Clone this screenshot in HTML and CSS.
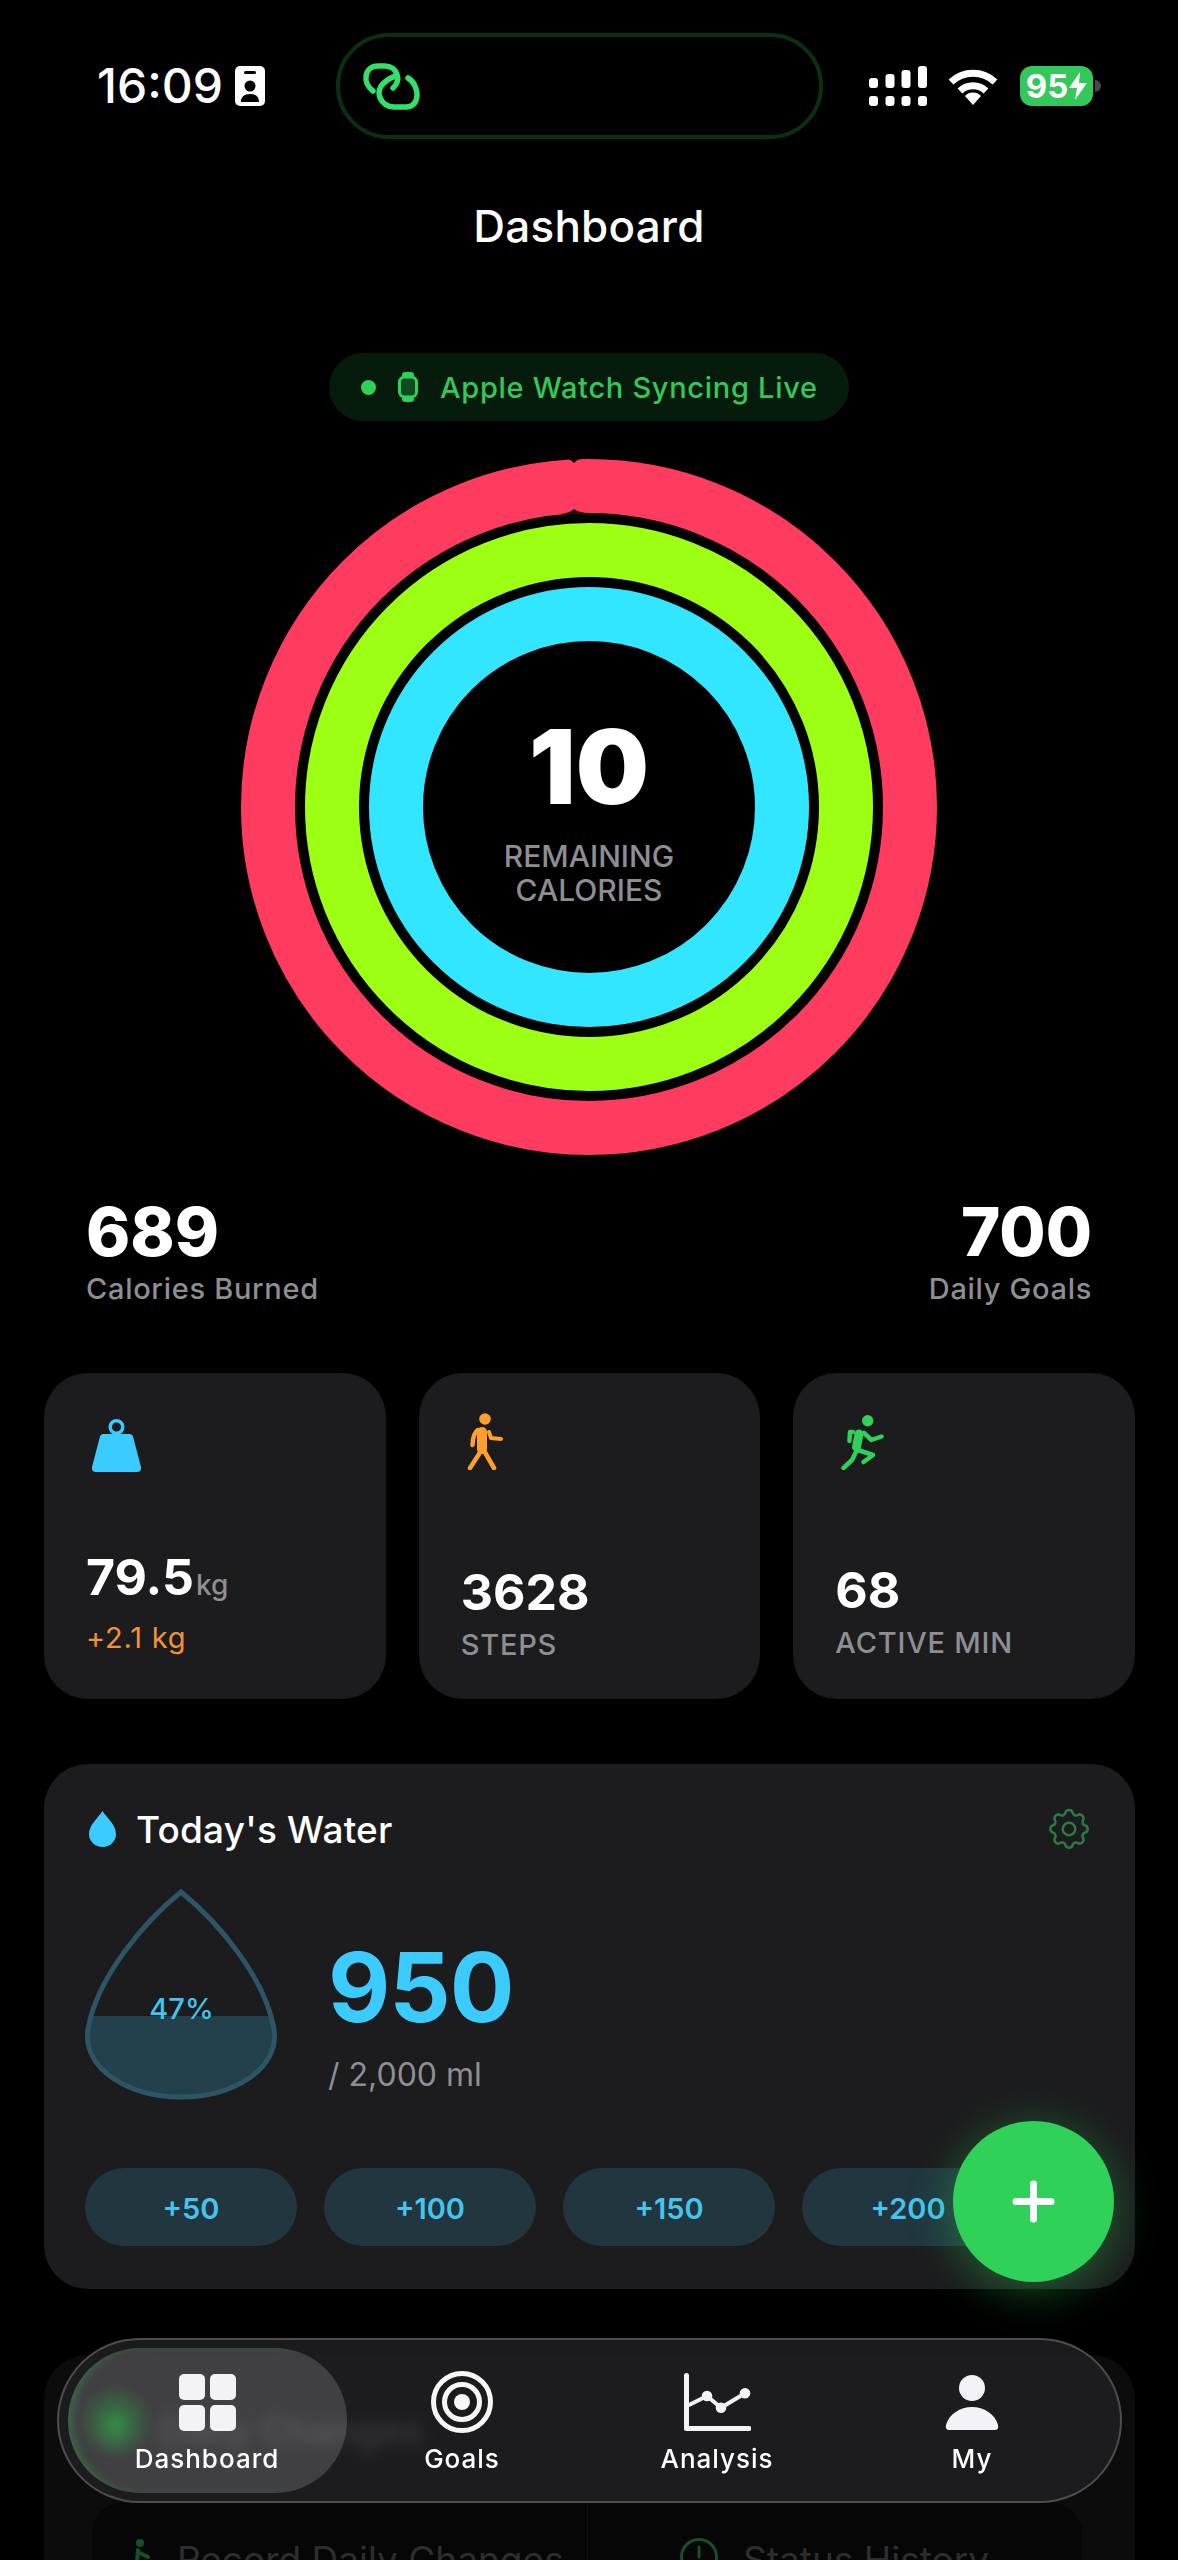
FILE: index.html
```html
<!DOCTYPE html>
<html lang="en">
<head>
    <meta charset="UTF-8">
    <meta name="viewport" content="width=device-width, initial-scale=1.0">
    <title>Dashboard</title>
    <link rel="stylesheet" href="styles.css">
</head>
<body>
    <header class="status">
        <div class="status-left">
            <span class="time">16:09</span>
            <svg class="badge" viewBox="0 0 30 40" width="30" height="40">
                <rect width="30" height="40" rx="5" fill="#fff"/>
                <rect x="9" y="5" width="12" height="3" rx="1.5" fill="#000"/>
                <circle cx="15" cy="20" r="5.5" fill="#000"/>
                <path d="M6 36Q6 28 15 28Q24 28 24 36Z" fill="#000"/>
            </svg>
        </div>
        <div class="island">
            <svg class="link" viewBox="0 0 60 47" width="60" height="47" fill="none" stroke="#32e06c" stroke-width="5.5" stroke-linecap="round">
                <path d="M12 28C1 20 3 3 17 3H24C36 3 41 17 32 25"/>
                <path d="M47 15C59 22 60 45 44 44H33C20 44 12 28 24 19C27 16 31 14 36 13"/>
            </svg>
        </div>
        <div class="status-right">
            <svg viewBox="0 0 60 40" width="60" height="40" fill="#fff">
                <rect x="0" y="12" width="9" height="10" rx="3"/>
                <rect x="16.5" y="8" width="9" height="14" rx="3"/>
                <rect x="32.5" y="4" width="9" height="18" rx="3"/>
                <rect x="49" y="0" width="9" height="22" rx="3"/>
                <rect x="0" y="30" width="9" height="10" rx="3"/>
                <rect x="16.5" y="30" width="9" height="10" rx="3"/>
                <rect x="32.5" y="30" width="9" height="10" rx="3"/>
                <rect x="49" y="30" width="9" height="10" rx="3"/>
            </svg>
            <svg class="wifi" viewBox="0 0 50 37" width="50" height="37" fill="none" stroke="#fff" stroke-width="7">
                <path d="M3 14A32 32 0 0 1 47 14"/>
                <path d="M12 23A19 19 0 0 1 38 23"/>
                <path d="M25 37L17 28A11 11 0 0 1 33 28Z" fill="#fff" stroke="none"/>
            </svg>
            <div class="battery">
                <span>95</span>
                <svg viewBox="0 0 18 28" width="18" height="28"><path d="M11 0L0 16H8L6 28L18 11H10Z" fill="#fff"/></svg>
            </div>
            <i class="battery-cap"></i>
        </div>
    </header>

    <h1 class="title">Dashboard</h1>

    <div class="sync">
        <i class="sync-dot"></i>
        <svg viewBox="0 0 20 30" width="20" height="30">
            <rect x="4" y="0" width="12" height="30" rx="3" fill="#30d158"/>
            <rect x="1.5" y="5" width="17" height="20" rx="5" fill="#0f4a22" stroke="#30d158" stroke-width="3"/>
        </svg>
        <span>Apple Watch Syncing Live</span>
    </div>

    <section class="rings">
        <svg viewBox="0 0 700 700" width="700" height="700" fill="none" stroke-width="54">
            <circle cx="350" cy="350" r="321" stroke="#ff3b5f"/>
            <circle cx="350" cy="350" r="257" stroke="#9dff14"/>
            <circle cx="350" cy="350" r="193" stroke="#32e6ff"/>
            <path d="M320 0Q331 1 335 6Q339 1 350 0Z" fill="#000"/>
            <path d="M322 57Q331 56 335 52Q340 56 350 56Z" fill="#000"/>
        </svg>
        <div class="rings-text">
            <div class="rings-num">10</div>
            <div class="rings-label">REMAINING<br>CALORIES</div>
        </div>
    </section>

    <section class="totals">
        <div>
            <div class="total-num">689</div>
            <div class="total-label">Calories Burned</div>
        </div>
        <div class="total-right">
            <div class="total-num">700</div>
            <div class="total-label">Daily Goals</div>
        </div>
    </section>

    <section class="metrics">
        <div class="metric metric-weight">
            <svg viewBox="0 0 49 53" width="49" height="53" fill="#3ccbff">
                <circle cx="24.5" cy="8" r="6.3" fill="none" stroke="#3ccbff" stroke-width="3.4"/>
                <path d="M11 15H38Q40.5 15 41 17.5L49 48Q49.5 53 45 53H4Q-.5 53 0 48L8 17.5Q8.5 15 11 15Z"/>
            </svg>
            <div class="metric-text">
                <div class="metric-num">79.5<small>kg</small></div>
                <div class="metric-sub">+2.1 kg</div>
            </div>
        </div>
        <div class="metric metric-steps">
            <svg viewBox="0 0 36 57" width="36" height="57" fill="none" stroke="#ff9f2e" stroke-linecap="round" stroke-linejoin="round" stroke-width="4.5">
                <circle cx="18" cy="6" r="5.8" fill="#ff9f2e" stroke="none"/>
                <path d="M15 19V36" stroke-width="10"/>
                <path d="M11 17Q6 20 5.5 32"/>
                <path d="M22 19L24 25L34 26" stroke-width="4"/>
                <path d="M14 38L3 55"/>
                <path d="M16 36L27 55"/>
            </svg>
            <div class="metric-text">
                <div class="metric-num">3628</div>
                <div class="metric-label">STEPS</div>
            </div>
        </div>
        <div class="metric metric-active">
            <svg viewBox="0 0 43 55" width="43" height="55" fill="none" stroke="#30d158" stroke-linecap="round" stroke-linejoin="round" stroke-width="4.5">
                <circle cx="26.7" cy="5.7" r="5.7" fill="#30d158" stroke="none"/>
                <path d="M18 19L15.5 32" stroke-width="9"/>
                <path d="M12 17L9 17L8.5 26"/>
                <path d="M23 18L30.5 25L40.5 21.5"/>
                <path d="M16 35L11 45L2.5 53"/>
                <path d="M17 35L32 40L22.5 47"/>
            </svg>
            <div class="metric-text">
                <div class="metric-num">68</div>
                <div class="metric-label">ACTIVE MIN</div>
            </div>
        </div>
    </section>

    <section class="water">
        <div class="water-head">
            <svg class="water-drop" viewBox="0 0 27 36" width="27" height="36">
                <path d="M13.5 0C18 7 27 14 27 23A13.5 13 0 0 1 0 23C0 14 9 7 13.5 0Z" fill="#3ccbff"/>
            </svg>
            <h2>Today's Water</h2>
            <svg class="gear" viewBox="2 2 20 20" width="42" height="42" fill="none" stroke="#2b7a43" stroke-width="1.2" stroke-linejoin="round">
                <path d="M10.3 3.2C10.7 1.6 13.3 1.6 13.7 3.2A1.7 1.7 0 0 0 16.3 4.3C17.7 3.4 19.6 5.3 18.7 6.7A1.7 1.7 0 0 0 19.7 9.3C21.3 9.7 21.3 12.3 19.7 12.7A1.7 1.7 0 0 0 18.7 15.3C19.6 16.7 17.7 18.6 16.3 17.7A1.7 1.7 0 0 0 13.7 18.7C13.3 20.3 10.7 20.3 10.3 18.7A1.7 1.7 0 0 0 7.7 17.7C6.3 18.6 4.4 16.7 5.3 15.3A1.7 1.7 0 0 0 4.3 12.7C2.7 12.3 2.7 9.7 4.3 9.3A1.7 1.7 0 0 0 5.3 6.7C4.4 5.3 6.3 3.4 7.7 4.3A1.7 1.7 0 0 0 10.3 3.2Z" transform="translate(0 1)"/>
                <circle cx="12" cy="12" r="3"/>
            </svg>
        </div>
        <div class="water-body">
            <div class="tear">
                <svg viewBox="0 0 193 211" width="193" height="211">
                    <clipPath id="tearClip"><path d="M96 3C60 32 12 88 3 140C-3 180 44 208 96 208C148 208 195 180 189 140C180 88 132 32 96 3Z"/></clipPath>
                    <rect y="127" width="193" height="84" fill="#23414c" clip-path="url(#tearClip)"/>
                    <path d="M96 3C60 32 12 88 3 140C-3 180 44 208 96 208C148 208 195 180 189 140C180 88 132 32 96 3Z" fill="none" stroke="#2d5566" stroke-width="5"/>
                </svg>
                <span class="tear-pct">47%</span>
            </div>
            <div class="water-stat">
                <div class="water-num">950</div>
                <div class="water-goal">/ 2,000 ml</div>
            </div>
        </div>
        <div class="quick">
            <button>+50</button>
            <button>+100</button>
            <button>+150</button>
            <button>+200</button>
        </div>
    </section>

    <section class="changes">
        <div class="changes-head">
            <svg viewBox="0 0 30 40" width="30" height="40" fill="#30d158"><circle cx="15" cy="20" r="15"/></svg>
            <h2>Daily Changes</h2>
        </div>
        <div class="changes-grid">
            <div class="changes-cell">
                <svg viewBox="0 0 28 40" width="28" height="40" fill="none" stroke="#15502a" stroke-width="4" stroke-linecap="round">
                    <circle cx="16" cy="5" r="4" fill="#15502a" stroke="none"/>
                    <path d="M14 12L13 24L4 36M13 24L22 36M14 14L24 19"/>
                </svg>
                <span>Record Daily Changes</span>
            </div>
            <div class="changes-cell">
                <svg viewBox="0 0 38 38" width="38" height="38" fill="none" stroke="#15502a" stroke-width="3" stroke-linecap="round">
                    <circle cx="19" cy="19" r="17.5"/>
                    <path d="M19 9V19"/>
                </svg>
                <span>Status History</span>
            </div>
        </div>
    </section>

    <button class="fab">
        <svg viewBox="0 0 43 43" width="43" height="43" stroke="#fff" stroke-width="7" stroke-linecap="round">
            <path d="M21.5 4V39M4 21.5H39"/>
        </svg>
    </button>

    <nav class="tabbar">
        <div class="tab tab-active">
            <div class="tab-icon">
                <svg viewBox="0 0 57 57" width="57" height="57" fill="#f2f2f7">
                    <rect width="26" height="26" rx="5"/>
                    <rect x="31" width="26" height="26" rx="5"/>
                    <rect y="31" width="26" height="26" rx="5"/>
                    <rect x="31" y="31" width="26" height="26" rx="5"/>
                </svg>
            </div>
            <span>Dashboard</span>
        </div>
        <div class="tab">
            <div class="tab-icon">
                <svg viewBox="0 0 62 62" width="62" height="62" fill="none" stroke="#f7f7f7" stroke-width="5">
                    <circle cx="31" cy="31" r="28.5"/>
                    <circle cx="31" cy="31" r="17.5"/>
                    <circle cx="31" cy="31" r="8" fill="#f7f7f7" stroke="none"/>
                </svg>
            </div>
            <span>Goals</span>
        </div>
        <div class="tab">
            <div class="tab-icon">
                <svg viewBox="0 0 68 58" width="68" height="58" fill="none" stroke="#f2f2f7" stroke-linecap="round" stroke-linejoin="round">
                    <path d="M3.5 2.5V55.5H66" stroke-width="5"/>
                    <path d="M6 32L24 23L38 34.7L62 20.3" stroke-width="4"/>
                    <circle cx="24" cy="23" r="5.3" fill="#f2f2f7" stroke="none"/>
                    <circle cx="38" cy="34.7" r="5.3" fill="#f2f2f7" stroke="none"/>
                    <circle cx="62" cy="20.3" r="5.3" fill="#f2f2f7" stroke="none"/>
                </svg>
            </div>
            <span>Analysis</span>
        </div>
        <div class="tab">
            <div class="tab-icon">
                <svg viewBox="0 0 54 55" width="54" height="55" fill="#f2f2f7">
                    <circle cx="27" cy="13" r="13"/>
                    <path d="M4 55H50Q54 55 53 50C50 39 39 32 27 32C15 32 4 39 1 50Q0 55 4 55Z"/>
                </svg>
            </div>
            <span>My</span>
        </div>
    </nav>
</body>
</html>
```

FILE: styles.css
```css
* {
    box-sizing: border-box;
}
body {
    position: relative;
    width: 1178px;
    height: 2560px;
    margin: 0;
    overflow: hidden;
    background-color: #000;
    color: #fff;
    font-family: Inter, "Noto Sans", sans-serif;
}
svg {
    display: block;
    flex: none;
}

/* status bar */
.status {
    display: flex;
    align-items: center;
    padding-top: 33px;
}
.status-left {
    display: flex;
    align-items: center;
    width: 336px;
    padding-left: 97px;
}
.time {
    font-size: 48px;
    font-weight: 500;
    line-height: 56px;
}
.badge {
    margin-left: 12px;
}
.island {
    display: flex;
    align-items: center;
    width: 487px;
    height: 106px;
    padding-left: 21px;
    border: 4px solid #0a3010;
    border-radius: 53px;
}
.status-right {
    display: flex;
    align-items: center;
    margin-left: 46px;
}
.wifi {
    margin-left: 19px;
}
.battery {
    display: flex;
    align-items: center;
    justify-content: center;
    gap: 1px;
    width: 73px;
    height: 40px;
    margin-left: 22px;
    border-radius: 12px;
    background-color: #34c759;
    font-size: 33px;
    font-weight: 700;
}
.battery-cap {
    width: 6px;
    height: 12px;
    margin-left: 2px;
    border-radius: 0 6px 6px 0;
    background-color: #48484a;
}

.title {
    margin: 61px 0 0;
    font-size: 44px;
    font-weight: 500;
    line-height: 52px;
    letter-spacing: 0.2px;
    text-align: center;
}

.sync {
    display: flex;
    align-items: center;
    width: 520px;
    height: 68px;
    margin: 101px auto 0;
    padding-left: 32px;
    border-radius: 34px;
    background-color: #051b0c;
    color: #34c759;
    font-size: 29px;
    font-weight: 500;
    letter-spacing: 0.7px;
}
.sync-dot {
    width: 15px;
    height: 15px;
    margin-right: 22px;
    border-radius: 50%;
    background-color: #30d158;
}
.sync span {
    margin-left: 22px;
}

/* activity rings */
.rings {
    display: grid;
    justify-content: center;
    align-items: center;
    margin-top: 36px;
}
.rings svg,
.rings-text {
    grid-area: 1 / 1;
}
.rings-text {
    padding-top: 8px;
    text-align: center;
}
.rings-num {
    font-size: 103px;
    font-weight: 900;
    line-height: 103px;
}
.rings-label {
    margin-top: 21px;
    color: #8e8e93;
    font-size: 30px;
    font-weight: 500;
    line-height: 34px;
}

.totals {
    display: flex;
    justify-content: space-between;
    margin-top: 41px;
    padding: 0 86px;
}
.total-right {
    text-align: right;
}
.total-num {
    font-size: 67px;
    font-weight: 800;
    line-height: 67px;
}
.total-label {
    margin-top: 6px;
    color: #8e8e93;
    font-size: 29px;
    font-weight: 500;
    line-height: 36px;
    letter-spacing: 0.7px;
}

/* small cards */
.metrics {
    display: grid;
    grid-template-columns: repeat(3, 1fr);
    gap: 33px;
    margin: 66px 43px 0 44px;
}
.metric {
    display: flex;
    flex-direction: column;
    height: 326px;
    border-radius: 44px;
    background-color: #1c1c1e;
}
.metric-weight {
    padding: 46px 42px 43px 48px;
}
.metric-steps {
    padding: 40px 42px 36px 48px;
}
.metric-active {
    padding: 42px 42px 38px 48px;
}
.metric-text {
    margin-top: auto;
    margin-left: -6px;
}
.metric-num {
    font-size: 50px;
    font-weight: 700;
    line-height: 50px;
}
.metric-num small {
    margin-left: 2px;
    color: #8e8e93;
    font-size: 28px;
    font-weight: 500;
}
.metric-sub,
.metric-label {
    margin-top: 10px;
    font-size: 29px;
    line-height: 36px;
    letter-spacing: 0.8px;
}
.metric-sub {
    color: #f0923a;
}
.metric-label {
    color: #8e8e93;
    font-weight: 500;
}

/* water card */
.water {
    height: 525px;
    margin: 65px 43px 0 44px;
    padding: 45px 45px 43px 41px;
    border-radius: 44px;
    background-color: #1c1c1e;
}
.water-head {
    display: flex;
    align-items: center;
    height: 40px;
}
.water-drop {
    margin-left: 4px;
}
.water-head h2 {
    flex: 1;
    margin: 0 0 0 20px;
    font-size: 37px;
    font-weight: 500;
    letter-spacing: 0.2px;
}
.water-body {
    display: flex;
    margin-top: 40px;
}
.tear {
    display: grid;
    justify-items: center;
    align-items: start;
    width: 193px;
}
.tear svg,
.tear-pct {
    grid-area: 1 / 1;
}
.tear-pct {
    margin-top: 102px;
    color: #3fc5f0;
    font-size: 29px;
    font-weight: 500;
    line-height: 36px;
}
.water-stat {
    margin: 50px 0 0 50px;
}
.water-num {
    color: #3ccbff;
    font-size: 96px;
    font-weight: 700;
    line-height: 96px;
    letter-spacing: -1px;
}
.water-goal {
    margin-top: 20px;
    color: #8e8e93;
    font-size: 32px;
    line-height: 40px;
}
.quick {
    display: flex;
    gap: 27px;
    margin-top: 68px;
}
.quick button {
    width: 212px;
    height: 78px;
    padding: 2px 0 0;
    border: 0;
    border-radius: 39px;
    background-color: #21363f;
    color: #45c4ee;
    font-family: inherit;
    font-size: 29px;
    font-weight: 600;
}

/* next card, mostly under the tab bar */
.changes {
    height: 205px;
    margin: 66px 43px 0 44px;
    padding: 52px 53px 0 48px;
    overflow: hidden;
    border-radius: 44px 44px 0 0;
    background-color: #0c0c0d;
}
.changes-head {
    display: flex;
    align-items: center;
    gap: 28px;
    height: 46px;
}
.changes-head svg {
    margin-left: 8px;
}
.changes-head h2 {
    margin: 0;
    color: #bdbdc2;
    font-size: 38px;
    font-weight: 600;
}
.changes-grid {
    display: grid;
    grid-template-columns: 1fr 1fr;
    height: 120px;
    margin-top: 50px;
    border-radius: 30px;
    background-color: #060607;
}
.changes-cell {
    display: flex;
    gap: 25px;
    padding: 35px 0 0 32px;
    color: #2e2e30;
    font-size: 37px;
    line-height: 44px;
}
.changes-cell + .changes-cell {
    border-left: 1px solid #101012;
    padding-left: 92px;
}

.fab {
    position: absolute;
    left: 953px;
    top: 2121px;
    display: flex;
    align-items: center;
    justify-content: center;
    width: 161px;
    height: 161px;
    padding: 0;
    border: 0;
    border-radius: 50%;
    background-color: #30d158;
    box-shadow: 0 8px 45px rgba(48, 209, 88, 0.4);
}

/* floating tab bar */
.tabbar {
    position: absolute;
    left: 57px;
    top: 2338px;
    display: flex;
    width: 1065px;
    height: 165px;
    padding: 0 20.5px;
    border: 2px solid rgba(255, 255, 255, 0.22);
    border-radius: 83px;
    background-color: rgba(32, 32, 34, 0.85);
    backdrop-filter: blur(7px);
}
.tab {
    position: relative;
    display: flex;
    flex-direction: column;
    align-items: center;
    width: 255px;
    padding-top: 31px;
    font-size: 26px;
    font-weight: 500;
    line-height: 32px;
    letter-spacing: 1px;
}
.tab-icon {
    display: flex;
    align-items: center;
    height: 62px;
}
.tab span {
    margin-top: 10px;
}
.tab-active::before {
    content: "";
    position: absolute;
    inset: 8px -12px 8px -12px;
    z-index: -1;
    border-radius: 72px;
    background-color: rgba(255, 255, 255, 0.16);
    background-image: radial-gradient(circle at 48px 74px, rgba(40, 170, 70, 0.6), transparent 38px);
    box-shadow: inset 8px 0 10px -4px rgba(48, 209, 88, 0.3);
}
```
